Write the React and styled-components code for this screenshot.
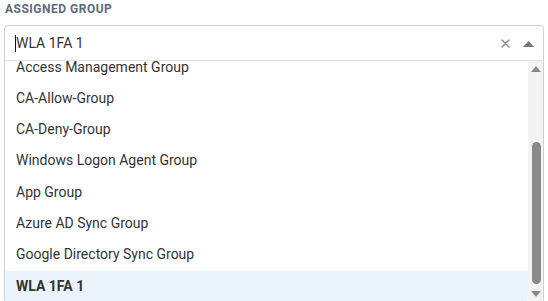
import React from "react";
import styled, { createGlobalStyle } from "styled-components";

const GlobalStyle = createGlobalStyle`
  html, body {
    margin: 0;
    padding: 0;
    background: #ffffff;
  }
  body {
    font-family: Roboto, "Liberation Sans", Arial, sans-serif;
  }
`;

const groups = [
  "Default Group",
  "Admins Group",
  "Helpdesk Group",
  "Access Management Group",
  "CA-Allow-Group",
  "CA-Deny-Group",
  "Windows Logon Agent Group",
  "App Group",
  "Azure AD Sync Group",
  "Google Directory Sync Group",
  "WLA 1FA 1",
];

const selected = "WLA 1FA 1";

const Page = styled.div`
  padding: 2px 4px 0 4px;
  width: 548px;
  box-sizing: border-box;
`;

const Label = styled.div`
  font-size: 12px;
  font-weight: 700;
  letter-spacing: 0.5px;
  color: #5f6b7a;
  line-height: 14px;
  padding-left: 1px;
  margin-bottom: 9px;
  text-transform: uppercase;
`;

const Select = styled.div`
  border: 1px solid #cfcfcf;
  border-radius: 4px;
  display: flex;
  flex-direction: column;
  height: 276px;
  overflow: hidden;
`;

const Control = styled.div`
  height: 34px;
  display: flex;
  align-items: center;
  border-bottom: 1px solid #e2e2e2;
  padding: 0 9px 0 10px;
  flex-shrink: 0;
`;

const Value = styled.div`
  flex: 1;
  display: flex;
  align-items: center;
  font-size: 14px;
  color: #333333;
`;

const Caret = styled.span`
  width: 1px;
  height: 17px;
  background: #111;
`;

const Indicators = styled.div`
  display: flex;
  align-items: center;
  gap: 13px;
  padding-top: 1px;
`;

const Menu = styled.div`
  flex: 1;
  display: flex;
  min-height: 0;
`;

const List = styled.div`
  flex: 1;
  display: flex;
  flex-direction: column;
  justify-content: flex-end;
  overflow: hidden;
`;

const Option = styled.div`
  flex-shrink: 0;
  font-size: 14px;
  line-height: 19.32px;
  padding: 6px 11px;
  color: #333333;
  font-weight: ${(p) => (p.$active ? 700 : 400)};
  background: ${(p) => (p.$active ? "#ebf3fd" : "transparent")};
  border-bottom-right-radius: ${(p) => (p.$active ? "4px" : "0")};
`;

const Scrollbar = styled.div`
  width: 15px;
  background: #f3f3f3;
  display: flex;
  flex-direction: column;
  align-items: center;
`;

const Arrow = styled.div`
  height: 16px;
  width: 100%;
  display: flex;
  align-items: center;
  justify-content: center;
`;

const Track = styled.div`
  flex: 1;
  display: flex;
  flex-direction: column;
  justify-content: flex-end;
  align-items: center;
  padding-bottom: 2px;
`;

const Thumb = styled.div`
  width: 9px;
  height: 142px;
  background: #8a8a8a;
  border-radius: 5px;
  margin-left: 1px;
`;

function Triangle({ down, color = "#777", w = 10, h = 5 }) {
  return (
    <svg width={w} height={h} viewBox={`0 0 ${w} ${h}`}>
      {down ? (
        <polygon points={`0,0 ${w},0 ${w / 2},${h}`} fill={color} />
      ) : (
        <polygon points={`0,${h} ${w},${h} ${w / 2},0`} fill={color} />
      )}
    </svg>
  );
}

function ClearIcon() {
  return (
    <svg width="9" height="9" viewBox="0 0 9 9">
      <path
        d="M1 1 L8 8 M8 1 L1 8"
        stroke="#8c939b"
        strokeWidth="1.5"
        strokeLinecap="round"
      />
    </svg>
  );
}

export default function App() {
  return (
    <Page>
      <GlobalStyle />
      <Label>Assigned Group</Label>
      <Select>
        <Control>
          <Value>
            <Caret />
            {selected}
          </Value>
          <Indicators>
            <ClearIcon />
            <Triangle w={11} h={6} />
          </Indicators>
        </Control>
        <Menu>
          <List>
            {groups.map((g) => (
              <Option key={g} $active={g === selected}>
                {g}
              </Option>
            ))}
          </List>
          <Scrollbar>
            <Arrow>
              <Triangle w={10} h={6} color="#888" />
            </Arrow>
            <Track>
              <Thumb />
            </Track>
            <Arrow>
              <Triangle down w={10} h={6} color="#888" />
            </Arrow>
          </Scrollbar>
        </Menu>
      </Select>
    </Page>
  );
}
